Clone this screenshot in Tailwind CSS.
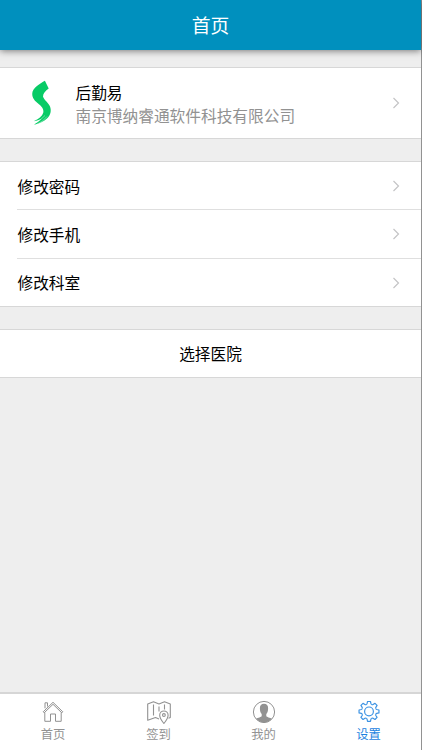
<!DOCTYPE html>
<html lang="zh-CN">
<head>
<meta charset="utf-8">
<meta name="viewport" content="width=device-width, initial-scale=1">
<title>首页</title>
<script src="https://cdn.jsdelivr.net/npm/@tailwindcss/browser@4"></script>
</head>
<body class="h-[750px] overflow-hidden bg-[#eeeeee] font-['Noto_Sans_CJK_SC',sans-serif] text-[15.7px] text-black">
<div class="flex h-[750px] w-[422px] flex-col border-r border-[#929292]">
  <header class="relative flex h-[50px] shrink-0 items-center justify-center bg-[#0090be] text-[18.8px] leading-none text-white shadow-[0_1px_7px_rgba(0,0,0,0.5)]">首页</header>

  <main class="flex grow flex-col">
    <section class="mt-[17px] flex h-[72px] items-center border-y border-[#d7d7d7] bg-white pr-[21px]">
      <svg class="ml-[31px] h-[48px] w-[22px] shrink-0" viewBox="0 0 22 48">
        <path fill="#08cb66" d="M13.900 1.800C9 4.500 3.500 8 1.600 12.500C.3 17.500 2.800 21 6.500 24C10.500 27 13 30 12.300 33.500C11.300 37.300 7.500 40 2.800 42.200C6 41.800 8.500 40.800 10.500 39.800C8.500 42 5.500 44 3 45.800C8.500 44.500 13 42.500 16 39.500C19.800 36 20.500 31.500 19 27.500C17.300 23.500 13 21 12 17.500C12 14.500 14.500 11.500 17.700 9.500Z"/>
        <path fill="none" stroke="#fff" stroke-opacity=".65" stroke-width=".6" d="M3 44.300Q10 41.500 14 36.500M5 45.600Q12 43 16 37.500"/>
      </svg>
      <div class="ml-[22.500px] flex grow flex-col pt-px leading-[23px]">
        <div>后勤易</div>
        <div class="text-[#929292]">南京博纳睿通软件科技有限公司</div>
      </div>
      <svg class="h-[12px] w-[8px]" viewBox="0 0 8 12" fill="none" stroke="#c4c4c6" stroke-width="1.200"><path d="M1.500 1L6.500 6L1.500 11"/></svg>
    </section>

    <section class="mt-[22px] h-[146px] border-y border-[#d7d7d7] bg-white pl-[17px]">
      <div class="flex h-[48px] items-center border-b border-[#dfdfdf] pr-[21px]"><span class="grow pt-[2px] pl-[0.500px]">修改密码</span>
        <svg class="h-[12px] w-[8px]" viewBox="0 0 8 12" fill="none" stroke="#c4c4c6" stroke-width="1.200"><path d="M1.500 1L6.500 6L1.500 11"/></svg></div>
      <div class="flex h-[49px] items-center border-b border-[#dfdfdf] pr-[21px]"><span class="grow pt-[2px] pl-[0.500px]">修改手机</span>
        <svg class="h-[12px] w-[8px]" viewBox="0 0 8 12" fill="none" stroke="#c4c4c6" stroke-width="1.200"><path d="M1.500 1L6.500 6L1.500 11"/></svg></div>
      <div class="flex h-[47px] items-center pr-[21px]"><span class="grow pt-px pl-[0.500px]">修改科室</span>
        <svg class="h-[12px] w-[8px]" viewBox="0 0 8 12" fill="none" stroke="#c4c4c6" stroke-width="1.200"><path d="M1.500 1L6.500 6L1.500 11"/></svg></div>
    </section>

    <section class="mt-[22px] flex h-[49px] items-center justify-center border-y border-[#d7d7d7] bg-white pt-px">选择医院</section>
  </main>

  <nav class="grid h-[58px] shrink-0 grid-cols-4 border-t-2 border-[#d6d6d6] bg-white pl-px text-[12.300px] leading-[16px] text-[#929292]">
    <div class="flex flex-col items-center pt-[6px] pr-px">
      <svg class="h-[24px] w-[24px]" viewBox="0 0 24 24" fill="none" stroke="#929292" stroke-width="1" stroke-linejoin="round">
        <path d="M2.200 11.800L12 2.300L21.800 11.800L20.800 12.800L12 4.300L3.200 12.800ZM4 8.300V2.800H6.500V6.500M3.800 12.500V21.300H9.500V14H14.500V21.300H20.200V12.500"/></svg>
      <span class="mt-[2px]">首页</span>
    </div>
    <div class="flex flex-col items-center pt-[6px]">
      <svg class="h-[24px] w-[24px]" viewBox="0 0 24 24" fill="none" stroke="#929292" stroke-width="1.100" stroke-linejoin="round">
        <path d="M12 19L8.500 17.500L.7 20.300V4L6.500 1.800L12 4L17.500 1.800L23.300 4V17.500L21.500 18.300M6.500 4.500V15.500M12 6.500V11.500M17.500 4.500V9.500"/>
        <path fill="#fff" d="M16.900 23.500C14.500 20.500 12.700 18 12.700 15.200A4.200 4.200 0 0 1 21.100 15.200C21.100 18 19.300 20.500 16.900 23.500Z"/><circle cx="16.900" cy="15" r="1.400"/></svg>
      <span class="mt-[2px]">签到</span>
    </div>
    <div class="flex flex-col items-center pt-[6px]">
      <svg class="h-[24px] w-[24px]" viewBox="0 0 24 24">
        <circle cx="12" cy="12" r="10.600" fill="none" stroke="#929292"/>
        <path fill="#929292" d="M12 3.800C9.200 3.800 7.800 5.700 7.900 8.200C7.900 11 8.500 12.700 9.700 14V16C9.300 17.300 6 17.500 4.100 18.700A10.300 10.300 0 0 0 19.900 18.700C18 17.500 14.700 17.300 14.300 16V14C15.500 12.700 16.100 11 16.100 8.200C16.200 5.700 14.800 3.800 12 3.800Z"/></svg>
      <span class="mt-[2px]">我的</span>
    </div>
    <div class="flex flex-col items-center pt-[6px] text-[#1c82e0]">
      <svg class="h-[24px] w-[24px]" viewBox="-12.300 -11.700 24.600 24.600" fill="none" stroke="#3b92e3" stroke-width="1.200" stroke-linejoin="round">
        <defs><path id="tooth" d="M-2.900 -7Q-2.200 -7.200 -2 -7.900L-1.500 -10.200H1.500L2 -7.900Q2.200 -7.200 2.900 -7"/></defs>
        <use href="#tooth"/><use href="#tooth" transform="rotate(45)"/><use href="#tooth" transform="rotate(90)"/><use href="#tooth" transform="rotate(135)"/>
        <use href="#tooth" transform="rotate(180)"/><use href="#tooth" transform="rotate(225)"/><use href="#tooth" transform="rotate(270)"/><use href="#tooth" transform="rotate(315)"/>
        <circle r="4.500"/></svg>
      <span class="mt-[2px]">设置</span>
    </div>
  </nav>
</div>
</body>
</html>
